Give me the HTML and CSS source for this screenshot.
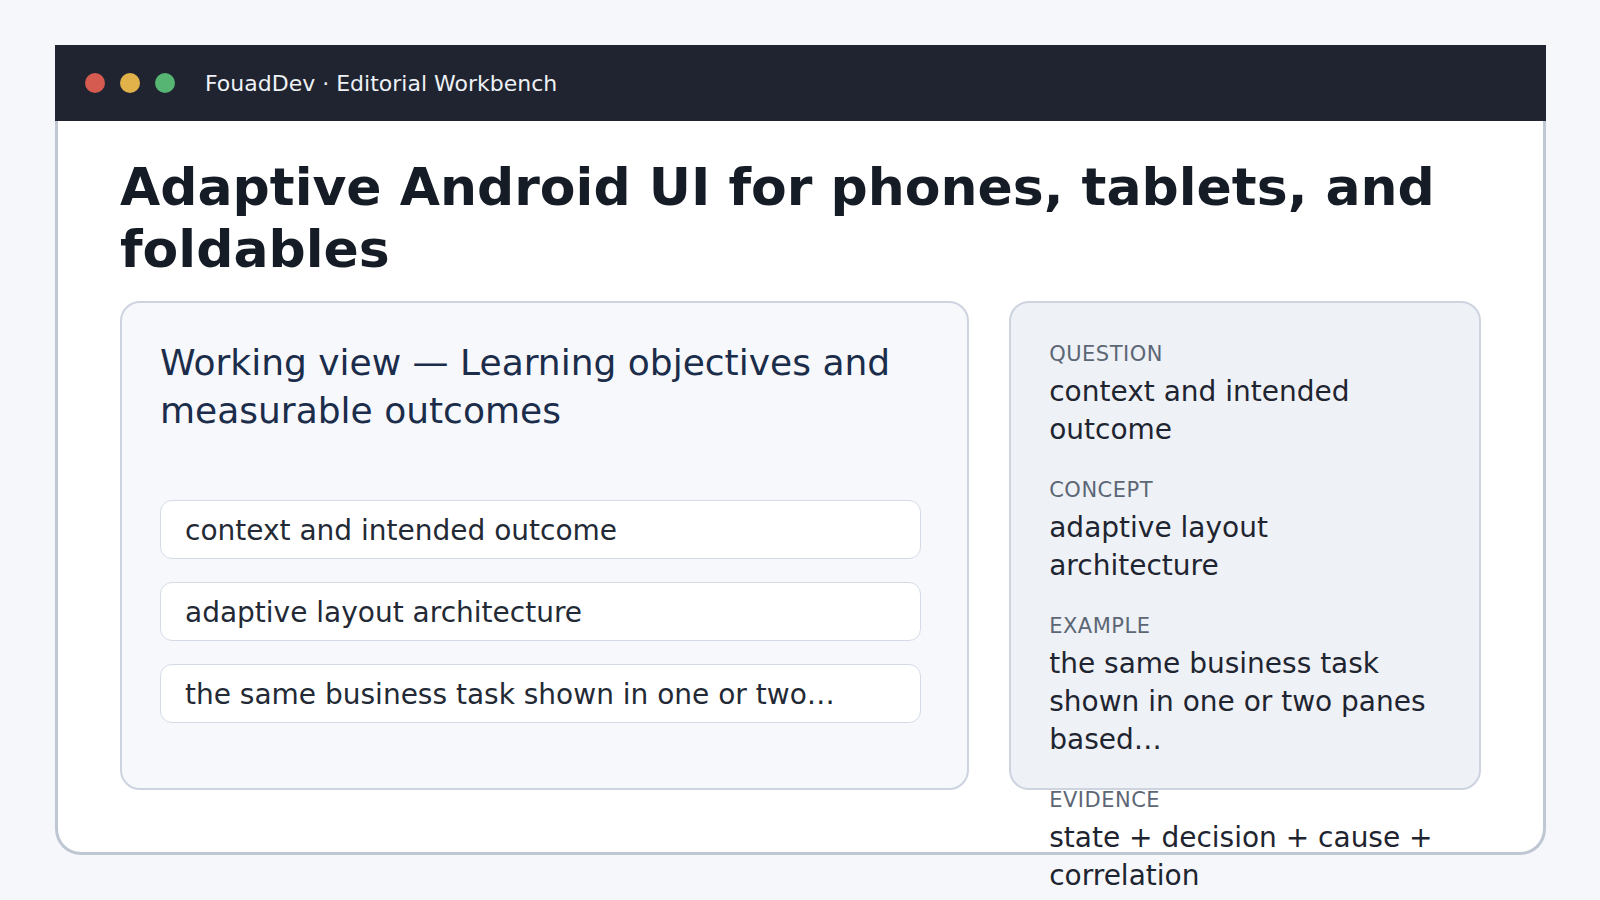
FILE: index.html
```html
<!DOCTYPE html>
<html lang="en">
<head>
<meta charset="utf-8">
<title>FouadDev · Editorial Workbench</title>
<link rel="stylesheet" href="styles.css">
</head>
<body>
  <div class="window">
    <header class="titlebar">
      <span class="dot dot-red"></span>
      <span class="dot dot-yellow"></span>
      <span class="dot dot-green"></span>
      <span class="titlebar-text">FouadDev · Editorial Workbench</span>
    </header>
    <main class="panel">
      <h1 class="page-title">Adaptive Android UI for phones, tablets, and foldables</h1>
      <div class="columns">
        <section class="card card-work">
          <h2 class="card-title">Working view — Learning objectives and measurable outcomes</h2>
          <ul class="items">
            <li class="item">context and intended outcome</li>
            <li class="item">adaptive layout architecture</li>
            <li class="item">the same business task shown in one or two…</li>
          </ul>
        </section>
        <aside class="card card-side">
          <dl class="facts">
            <div class="fact">
              <dt class="fact-label">Question</dt>
              <dd class="fact-value">context and intended outcome</dd>
            </div>
            <div class="fact">
              <dt class="fact-label">Concept</dt>
              <dd class="fact-value">adaptive layout architecture</dd>
            </div>
            <div class="fact">
              <dt class="fact-label">Example</dt>
              <dd class="fact-value">the same business task shown in one or two panes based…</dd>
            </div>
            <div class="fact">
              <dt class="fact-label">Evidence</dt>
              <dd class="fact-value">state + decision + cause + correlation</dd>
            </div>
          </dl>
        </aside>
      </div>
    </main>
  </div>
</body>
</html>
```

FILE: styles.css
```css
* {
  box-sizing: border-box;
}

html, body {
  height: 100%;
}

body {
  margin: 0;
  padding: 45px 54px 45px 55px;
  background: #f5f7fb;
  font-family: "DejaVu Sans", "Liberation Sans", sans-serif;
  color: #1f2530;
}

.window {
  height: 810px;
  display: flex;
  flex-direction: column;
}

.titlebar {
  height: 76px;
  flex: none;
  background: #1f2430;
  display: flex;
  align-items: center;
  padding-left: 30px;
  gap: 15px;
}

.dot {
  width: 20px;
  height: 20px;
  border-radius: 50%;
  flex: none;
}

.dot-red { background: #d55a50; }
.dot-yellow { background: #e2b24a; }
.dot-green { background: #56b572; }

.titlebar-text {
  margin-left: 15px;
  color: #eef1f5;
  font-size: 22px;
}

.panel {
  flex: 1;
  min-height: 0;
  display: flex;
  flex-direction: column;
  background: #ffffff;
  border: 3px solid #bfc7d3;
  border-top: none;
  border-radius: 0 0 26px 26px;
  padding: 35px 62px 62px;
}

.page-title {
  margin: 0 0 20px;
  font-size: 52px;
  line-height: 1.2;
  font-weight: 700;
  color: #161c26;
}

.columns {
  flex: 1;
  min-height: 0;
  display: grid;
  grid-template-columns: 1.8fr 1fr;
  grid-template-rows: minmax(0, 1fr);
  gap: 40px;
}

.card {
  min-height: 0;
  border: 2px solid #cdd4df;
  border-radius: 20px;
  padding: 36px 38px;
}

.card-work {
  background: #f6f8fc;
  padding-right: 46px;
}

.card-side {
  background: #eef1f6;
  padding-top: 37px;
}

.card-title {
  margin: 0 0 65px;
  font-size: 36px;
  line-height: 48px;
  font-weight: 400;
  color: #1b2d4a;
}

.items {
  list-style: none;
  margin: 0;
  padding: 0;
  display: flex;
  flex-direction: column;
  gap: 23px;
}

.item {
  background: #ffffff;
  border: 1px solid #d4dbe6;
  border-radius: 12px;
  padding: 11px 24px 8px;
  font-size: 28px;
  line-height: 38px;
  color: #232a35;
  white-space: nowrap;
}

.facts {
  margin: 0;
  display: flex;
  flex-direction: column;
  gap: 27px;
}

.fact {
  display: flex;
  flex-direction: column;
  gap: 5px;
}

.fact-label {
  font-size: 21px;
  line-height: 28px;
  letter-spacing: 0.5px;
  text-transform: uppercase;
  color: #5c6675;
}

.fact-value {
  margin: 0;
  font-size: 28px;
  line-height: 38px;
  color: #1f2530;
}
```
